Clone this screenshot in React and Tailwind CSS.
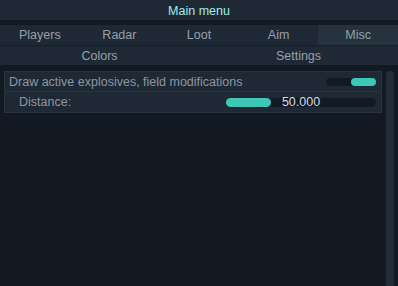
import React from 'react';

const tabs = ['Players', 'Radar', 'Loot', 'Aim', 'Misc'];

export default function App() {
  return (
    <div className="w-[398px] h-[286px] bg-[#121923] flex flex-col overflow-hidden text-[12.5px] font-['Liberation_Sans',Arial,sans-serif]">
      <div className="h-[20px] bg-[#1e2835] flex items-center justify-center pt-[3px] text-[#9feee8]">Main menu</div>
      <div className="h-[5px] bg-[#131a24]" />
      <div className="h-[21px] grid grid-cols-5 bg-[#1f2935] border-b border-[#161d27] text-[#95a0ac]">
        {tabs.map((t) => (
          <div key={t} className={`flex items-center justify-center pt-[1px] ${t === 'Misc' ? 'bg-[#27323f]' : ''}`}>
            {t}
          </div>
        ))}
      </div>
      <div className="h-[19px] grid grid-cols-2 bg-[#1f2935] text-[#95a0ac]">
        <div className="flex items-center justify-center pt-[1px]">Colors</div>
        <div className="flex items-center justify-center pt-[1px]">Settings</div>
      </div>
      <div className="flex-1 flex gap-[4px] pl-[4px] pt-[6px]">
        <div className="w-[378px] self-start flex flex-col">
          <div className="h-[21px] bg-[#1f2935] border border-[#283340] flex items-center justify-between pl-[4px] pr-[5px] text-[#8a96a2]">
            <span className="pt-[1px]">Draw active explosives, field modifications</span>
            <div className="w-[50px] h-[8px] rounded-full bg-[#131a24] flex justify-end">
              <div className="w-[25px] h-[8px] rounded-full bg-[#3ec7b6]" />
            </div>
          </div>
          <div className="h-[21px] bg-[#1f2935] border border-t-0 border-[#283340] flex items-center justify-between pl-[14px] pr-[5px] text-[#8a96a2]">
            <span className="pt-[1px]">Distance:</span>
            <div className="relative w-[150px] h-[9px] rounded-full bg-[#131a24]">
              <div className="w-[45px] h-[9px] rounded-full bg-[#3ec7b6]" />
              <span className="absolute inset-0 flex items-center justify-center pt-[1px] text-[#d4dae0]">50.000</span>
            </div>
          </div>
        </div>
        <div className="w-[8px] rounded-t-[4px] bg-[#222d3a]" />
      </div>
    </div>
  );
}
